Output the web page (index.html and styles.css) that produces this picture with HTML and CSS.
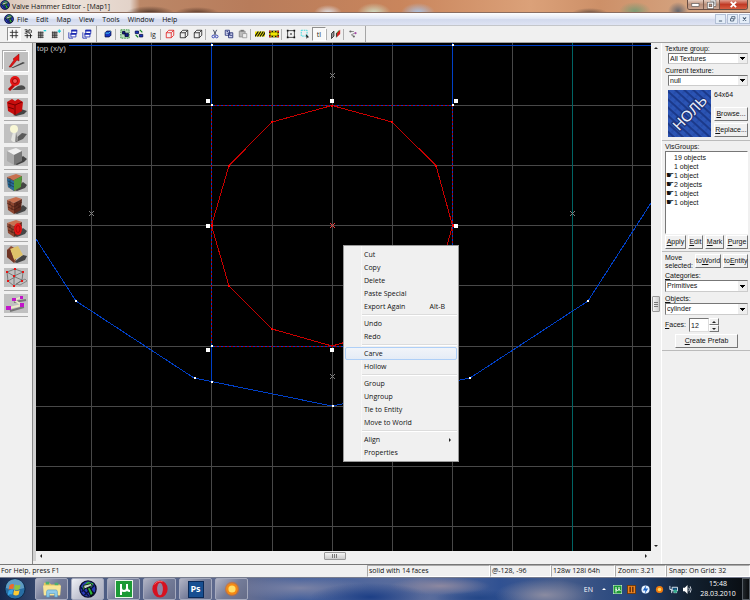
FILE: index.html
```html
<!DOCTYPE html>
<html lang="en">
<head>
    <meta charset="UTF-8">
    <meta name="viewport" content="width=device-width, initial-scale=1.0">
    <title>Valve Hammer Editor - [Map1]</title>
    <link rel="stylesheet" href="styles.css">
</head>
<body>

    <!-- shared icon shapes -->
    <svg class="defs" aria-hidden="true">
        <defs>
            <symbol id="hammer" viewBox="0 0 20 20">
                <circle cx="10" cy="10" r="9" fill="#2a3bb8" stroke="#080d2c" stroke-width="1.500"/>
                <path d="M3 13l10-10M6 17L17 6M2 8l9 10M13 12l5 3" stroke="#0a1040" stroke-width="1.500"/>
                <path d="M4 7l6-5 6 2-2 4-4 1-3-1-2 3z" fill="#2fb536"/>
                <path d="M9 9l3-1 4 7-3 3z" fill="#2fb536" stroke="#0a0f18" stroke-width="1.300"/>
                <path d="M5 6l8-2 2 2-9 4z" fill="#c9d9c9" stroke="#0a0f18"/>
            </symbol>
            <symbol id="cube" viewBox="0 0 12 12">
                <path d="M1.500 4.500h6v6h-6zM1.500 4.500l3-3h6l-3 3M10.500 1.500v6l-3 3" fill="none" stroke="currentColor"/>
            </symbol>
            <symbol id="windows" viewBox="0 0 12 12">
                <path d="M4.500 1.500h6v4h-6zM3.500 5.500h6v4h-6z" fill="#fff" stroke="#1929b0"/>
                <path d="M4 2h7M3 6h7" stroke="#1929b0" stroke-width="2"/>
                <path d="M1 4v7h5" fill="none" stroke="#1929b0"/>
            </symbol>
            <symbol id="brick" viewBox="0 0 24 19">
                <path d="M10 17l9-8 4 3-2 3-8 3z" fill="#454545"/>
                <path d="M3 4l9-3 6 2-8 4z" fill="#c7704f"/>
                <path d="M3 4l7 3v11l-6-4z" fill="#8c4630"/>
                <path d="M10 7l8-4-1 11-7 4z" fill="#5f2a1d"/>
                <path d="M3 7l7 4 8-5M4 11l6 3 7-4M6 5v4M8 10v4M13 6v3M15 9v3" fill="none" stroke="#3c1912" stroke-width="0.600"/>
            </symbol>
            <symbol id="torrent" viewBox="0 0 18 18">
                <rect width="18" height="18" fill="#e9f5e9"/>
                <rect x="1" y="1" width="16" height="16" fill="#1b9a35"/>
                <path d="M6 4v11M6 8q0 3 3 3t3-3V4M12 8q0 3 3 3" fill="none" stroke="#fff" stroke-width="2"/>
            </symbol>
        </defs>
    </svg>

    <div class="window">
        <header class="titlebar">
            <svg class="app-icon"><use href="#hammer"/></svg>
            <span class="title">Valve Hammer Editor - [Map1]</span>
            <div class="window-buttons">
                <button type="button" aria-label="Minimize"><svg viewBox="0 0 12 10"><rect x="2" y="4" width="8" height="3" fill="#fff" stroke="#555" stroke-width="0.700"/></svg></button>
                <button type="button" aria-label="Restore"><svg viewBox="0 0 12 10"><path d="M5 1h5v5h-1M2.500 3.500h5v5h-5z" fill="none" stroke="#555" stroke-width="2.600"/><path d="M5 1h5v5h-1M2.500 3.500h5v5h-5z" fill="none" stroke="#fff" stroke-width="1.300"/></svg></button>
                <button type="button" class="close" aria-label="Close"><svg viewBox="0 0 12 10"><path d="M3 2l6 6M9 2L3 8" stroke="#fff" stroke-width="2"/></svg></button>
            </div>
        </header>

        <nav class="menubar">
            <svg class="app-icon"><use href="#hammer"/></svg>
            <button type="button">File</button>
            <button type="button">Edit</button>
            <button type="button">Map</button>
            <button type="button">View</button>
            <button type="button">Tools</button>
            <button type="button">Window</button>
            <button type="button">Help</button>
            <div class="child-buttons">
                <button type="button" aria-label="Minimize map"><svg viewBox="0 0 10 10"><path d="M3 7.500h4" stroke="#40566f" stroke-width="1.200"/></svg></button>
                <button type="button" aria-label="Restore map"><svg viewBox="0 0 10 10"><path d="M4 4V2h4v3H7M2.500 4.500h4v3h-4z" fill="none" stroke="#40566f"/></svg></button>
                <button type="button" aria-label="Close map"><svg viewBox="0 0 10 10"><path d="M3 3l4 4M7 3L3 7" stroke="#40566f" stroke-width="1.300"/></svg></button>
            </div>
        </nav>

        <div class="toolbar">
            <div class="band band-grid">
                <button type="button" class="pressed" aria-label="Toggle grid"><svg viewBox="0 0 12 12"><path d="M4 1v10M8.500 1v10M1 4h10M1 8h10" stroke="#222"/></svg></button>
                <button type="button" aria-label="Toggle 3D grid"><svg viewBox="0 0 12 12"><path d="M2 1h3v4H2M3 3h2M7 1v4h2l1-1V2L9 1zM5 6v5M9 6v5M2 8h9" fill="none" stroke="#111"/></svg></button>
                <button type="button" aria-label="Smaller grid"><svg viewBox="0 0 12 12"><path d="M2 3v8M4 3v8M6 3v8M1 4h7M1 6h7M1 8h7M1 10h7" stroke="#333"/><path d="M8 2h3" stroke="#10cbd4" stroke-width="1.500"/></svg></button>
                <button type="button" aria-label="Bigger grid"><svg viewBox="0 0 12 12"><path d="M2 3v8M4 3v8M6 3v8M1 4h7M1 6h7M1 8h7M1 10h7" stroke="#333"/><path d="M8 2.500h4M10 .5v4" stroke="#10cbd4" stroke-width="1.500"/></svg></button>
                <span class="sep"></span>
                <button type="button" aria-label="Load window state"><svg><use href="#windows"/></svg></button>
                <button type="button" aria-label="Save window state"><svg><use href="#windows"/></svg></button>
            </div>
            <div class="band band-main">
                <button type="button" aria-label="Carve"><svg viewBox="0 0 12 12"><path d="M2.500 4.500l2-2h5v5l-2 2h-5z" fill="#1634c4" stroke="#061048"/><path d="M3 5h4l2-2" stroke="#45e0f0" fill="none"/></svg></button>
                <span class="sep"></span>
                <button type="button" aria-label="Group"><svg viewBox="0 0 12 12"><rect x="1" y="1" width="10" height="10" fill="#b9dfbd" stroke="#178523" stroke-dasharray="2 1"/><path d="M3 3h3v3H3zM6 5h4v4H6z" fill="#111d86" stroke="#071038"/></svg></button>
                <button type="button" aria-label="Ungroup"><svg viewBox="0 0 12 12"><path d="M1.500 2.500h4v3h-4zM6.500 6.500h4v3h-4z" fill="#1b36c0" stroke="#07104b"/><path d="M7 1l3 3M2 7l3 3" stroke="#178523" stroke-width="1.500"/></svg></button>
                <button type="button">ig</button>
                <span class="sep"></span>
                <button type="button" class="red" aria-label="Hide selected"><svg><use href="#cube"/></svg></button>
                <button type="button" aria-label="Hide unselected"><svg><use href="#cube"/></svg></button>
                <button type="button" aria-label="Show all"><svg><use href="#cube"/></svg></button>
                <span class="sep"></span>
                <button type="button" aria-label="Cut"><svg viewBox="0 0 12 12"><path d="M4 1l3 6M8 1L5 7" stroke="#26304d"/><circle cx="4" cy="9" r="1.600" fill="none" stroke="#1c2cae"/><circle cx="8" cy="9" r="1.600" fill="none" stroke="#1c2cae"/></svg></button>
                <button type="button" aria-label="Copy"><svg viewBox="0 0 12 12"><path d="M1.500 1.500h5v6h-5zM5.500 4.500h5v6h-5z" fill="#e8ebff" stroke="#1c2670"/><path d="M7 6h2M7 8h3M3 3h2M3 5h2" stroke="#1c2670"/></svg></button>
                <button type="button" aria-label="Paste"><svg viewBox="0 0 12 12"><path d="M1.500 2.500h7v7h-7z" fill="#bbb" stroke="#888"/><path d="M5.500 5.500h5v5h-5z" fill="#eee" stroke="#999"/><path d="M3 2h4" stroke="#777" stroke-width="2"/></svg></button>
                <span class="sep"></span>
                <button type="button" aria-label="Cordon"><svg viewBox="0 0 12 12"><rect y="3" width="12" height="6" fill="#f2e600"/><path d="M0 9l4-6M3 9l4-6M6 9l4-6M9 9l4-6" stroke="#111" stroke-width="1.500"/></svg></button>
                <button type="button" aria-label="Edit cordon"><svg viewBox="0 0 12 12"><rect x="1" y="3" width="10" height="6" fill="#f2e600" stroke="#111" stroke-width="2"/><rect x="1" y="3" width="10" height="6" fill="none" stroke="#f2e600" stroke-width="2" stroke-dasharray="2 2"/><path d="M0 2h2v2H0zM10 2h2v2h-2zM0 8h2v2H0zM10 8h2v2h-2z" fill="#d21818"/></svg></button>
                <span class="sep"></span>
                <button type="button" aria-label="Select by handles"><svg viewBox="0 0 12 12"><rect x="2" y="2" width="8" height="8" fill="none" stroke="#333"/><path d="M1 1h2v2H1zM9 1h2v2H9zM1 9h2v2H1zM9 9h2v2H9z" fill="#111"/><path d="M5 5l2 2M7 5L5 7" stroke="#555"/></svg></button>
                <button type="button" aria-label="Auto select"><svg viewBox="0 0 12 12"><rect x="1.500" y="1.500" width="7" height="7" fill="none" stroke="#23d6df" stroke-dasharray="2 1"/><path d="M7 6l4 4-2 .2L8 12z" fill="#222"/></svg></button>
                <button type="button" class="pressed">tl</button>
                <span class="sep"></span>
                <button type="button" aria-label="Texture alignment"><svg viewBox="0 0 12 12"><path d="M.5 5.500l3-3v6l-3 3z" fill="#999" stroke="#222"/><path d="M6 5l4-4v5l-4 3z" fill="#209b35"/><path d="M7 5l4-4v5l-4 4z" fill="#d32020"/><path d="M6.500 5v5" stroke="#333"/></svg></button>
                <span class="sep"></span>
                <button type="button" aria-label="Run map"><svg viewBox="0 0 12 12"><path d="M2 3h5M8 5L4 7l3 2" fill="none" stroke="#777"/><circle cx="3" cy="3" r="1.300" fill="#666"/><circle cx="9" cy="5" r="1.300" fill="#a44aa6"/><circle cx="7" cy="9" r="1.300" fill="#666"/></svg></button>
            </div>
        </div>

        <main class="workspace">
            <aside class="tools">
                <div class="tool-group">
                    <button type="button" class="active" aria-label="Selection tool"><svg viewBox="0 0 24 19"><path d="M7 16l12-6 2 1-12 5z" fill="#484848"/><path d="M5 15l5-7-1-1 6-5v7l-2-1-6 7z" fill="#e31414" stroke="#8a0505" stroke-width="0.500"/></svg></button>
                    <button type="button" aria-label="Magnify"><svg viewBox="0 0 24 19"><path d="M8 15l6-4q5-2 7 1t-5 3z" fill="#4a4a4a"/><path d="M5 15l5-5" stroke="#b90808" stroke-width="3"/><circle cx="11" cy="6" r="5" fill="#e51414"/><circle cx="11" cy="6" r="2.500" fill="#ee5050" stroke="#a00505"/></svg></button>
                    <button type="button" aria-label="Camera"><svg viewBox="0 0 24 19"><path d="M9 17l8-6 6 2-3 3-8 2z" fill="#444"/><path d="M3 4l5-3 3 2 3-2 5 3-1 9-7 4-7-4z" fill="#c70d0d"/><path d="M4 5l7 2 7-3M11 7v10M4 9l6 2" fill="none" stroke="#700" stroke-width="1"/></svg></button>
                </div>
                <div class="tool-group">
                    <button type="button" aria-label="Entity tool"><svg viewBox="0 0 24 19"><path d="M10 16l8-7 5 1-4 5-7 3z" fill="#5b5b5b"/><path d="M9 8h3l2 8-3 2H9l-2-2z" fill="#e4e4e0"/><path d="M12 8l2 8-3 2z" fill="#888"/><circle cx="10" cy="5" r="4" fill="#f8f7d5"/></svg></button>
                    <button type="button" aria-label="Block tool"><svg viewBox="0 0 24 19"><path d="M10 17l9-8 4 3-3 3-7 3z" fill="#444"/><path d="M3 4l9-3 6 3-8 4z" fill="#efefef"/><path d="M3 4l7 4v10l-7-4z" fill="#aaa"/><path d="M10 8l8-4v10l-8 4z" fill="#777"/></svg></button>
                </div>
                <div class="tool-group">
                    <button type="button" aria-label="Texture application"><svg viewBox="0 0 24 19"><use href="#brick"/><path d="M3 5l7 3v10l-6-4z" fill="#2a6c98"/><path d="M10 7l8-4-1 11-7 4z" fill="#4f9a3a"/><path d="M4 8l6 3M4 11l6 3M6 7v7" stroke="#19374a" stroke-width="0.700"/></svg></button>
                    <button type="button" aria-label="Apply texture"><svg><use href="#brick"/></svg></button>
                    <button type="button" aria-label="Apply decals"><svg viewBox="0 0 24 19"><use href="#brick"/><ellipse cx="14" cy="10" rx="4" ry="6" fill="#e21616"/><ellipse cx="14" cy="10" rx="2" ry="3.500" fill="none" stroke="#a50606" stroke-width="0.700"/></svg></button>
                </div>
                <div class="tool-group">
                    <button type="button" aria-label="Clipping tool"><svg viewBox="0 0 24 19"><path d="M10 17l9-7 4 1-2 4-8 3z" fill="#444"/><path d="M3 5l4-4 7 4-3 13-8-6z" fill="#8d4931"/><path d="M6 4l8-3 5 9-9 5z" fill="#dfc36a"/><path d="M3 5l3-1 4 11v3l-7-6z" fill="#6e3424"/></svg></button>
                    <button type="button" aria-label="Vertex tool"><svg viewBox="0 0 24 19"><path d="M12 16l9-5 2 2-7 4z" fill="none" stroke="#888"/><path d="M3 4l8-3 8 3-1 8-8 6-6-5zM3 4l7 4 9-4M10 8v10M11 1v8l7 3M4 13l7-4" fill="none" stroke="#666" stroke-width="0.800"/><path d="M2 3h2v2H2zM10 0h2v2h-2zM18 3h2v2h-2zM9 7h2v2H9zM3 12h2v2H3zM9 17h2v2H9zM17 12h2v2h-2z" fill="#e61515"/></svg></button>
                </div>
                <div class="tool-group">
                    <button type="button" aria-label="Path tool"><svg viewBox="0 0 24 19"><path d="M6 17l14-4M10 8l12-2" stroke="#777" stroke-width="2"/><path d="M5 14l13-3-8-5 8-3" fill="none" stroke="#eee8cb" stroke-width="1.800"/><path d="M2 12h5v4H2zM16 9h4v4h-4zM8 4h4v3H8zM16 2h3v3h-3z" fill="#c215ca"/></svg></button>
                </div>
            </aside>

            <section class="viewport">
                <div class="view">
                    <svg class="map" viewBox="36 43 615 508" preserveAspectRatio="xMinYMin slice">
                        <g class="grid">
                            <path d="M91.500 43V551M151.500 43V551M211.500 381V551M272.500 43V551M332.500 43V551M392.500 43V551M452.500 346V551M512.500 43V551M632.500 43V551"/>
                            <path d="M36 105.500H211M453 105.500H651M36 165.500H651M36 225.500H651M36 285.500H651M36 346.500H211M453 346.500H651M36 406.500H651M36 466.500H651M36 526.500H651"/>
                        </g>
                        <path class="axis" d="M572.500 43V551"/>
                        <g class="world">
                            <path d="M69 45.500H651M211.500 43V381M452.500 43V381M211 105.500H453M211 346.500H453"/>
                            <path d="M36 239L76 301L194 378L332 406L470 378L588 301L651 203"/>
                        </g>
                        <path class="bounds" d="M211 105.500H453M211 346.500H453M211.500 105V347M452.500 105V347"/>
                        <polygon class="cylinder" points="332,105.500 392,122 436,165.500 452.500,225.500 436,286 392,329 332,346 272,329 229,286 211.500,225.500 229,165.500 272,122"/>
                        <path class="cylinder-points" d="M331 105h2v2h-2zM391 121h2v2h-2zM435 165h2v2h-2zM228 165h2v2h-2zM271 121h2v2h-2zM228 285h2v2h-2zM271 328h2v2h-2zM211 224h2v3h-2zM452 224h2v3h-2z"/>
                        <path class="vertices" d="M75 300h2v2h-2zM194 377h2v2h-2zM211 381h2v2h-2zM332 405h2v2h-2zM469 377h2v2h-2zM587 300h2v2h-2zM211 44h2v2h-2zM452 44h2v2h-2zM211 104h2v2h-2zM452 104h2v2h-2zM211 345h2v2h-2z"/>
                        <path class="handles" d="M206 99h4v4h-4zM330 99h4v4h-4zM454 99h4v4h-4zM206 224h4v4h-4zM454 224h4v4h-4zM206 348h4v4h-4zM330 348h4v4h-4z"/>
                        <path class="centers" d="M330 73l5 5M335 73l-5 5M330 374l5 5M335 374l-5 5M89 211l5 5M94 211l-5 5M570 211l5 5M575 211l-5 5"/>
                        <path class="centers selected" d="M330 223l5 5M335 223l-5 5"/>
                    </svg>
                    <span class="view-label">top (x/y)</span>

                    <div class="context-menu">
                        <button type="button">Cut</button>
                        <button type="button">Copy</button>
                        <button type="button">Delete</button>
                        <button type="button">Paste Special</button>
                        <button type="button">Export Again <span>Alt-B</span></button>
                        <hr>
                        <button type="button">Undo</button>
                        <button type="button">Redo</button>
                        <hr>
                        <button type="button" class="hover">Carve</button>
                        <button type="button">Hollow</button>
                        <hr>
                        <button type="button">Group</button>
                        <button type="button">Ungroup</button>
                        <button type="button">Tie to Entity</button>
                        <button type="button">Move to World</button>
                        <hr>
                        <button type="button">Align <i class="arrow right"></i></button>
                        <button type="button">Properties</button>
                    </div>
                </div>
                <div class="scrollbar vertical">
                    <i class="arrow up"></i>
                    <div class="track before"></div>
                    <div class="thumb"></div>
                    <div class="track"></div>
                    <i class="arrow down"></i>
                </div>
                <div class="scrollbar horizontal">
                    <i class="arrow left"></i>
                    <div class="track"></div>
                    <div class="thumb"></div>
                    <div class="track before"></div>
                    <i class="arrow right"></i>
                </div>
            </section>

            <aside class="panel">
                <section class="texture">
                    <label for="textureGroup">Texture group:</label>
                    <select id="textureGroup"><option>All Textures</option></select>
                    <label for="currentTexture">Current texture:</label>
                    <select id="currentTexture"><option>null</option></select>
                    <div class="preview">
                        <svg class="swatch" viewBox="0 0 43 47">
                            <defs>
                                <pattern id="stripes" width="6" height="6" patternUnits="userSpaceOnUse" patternTransform="rotate(42)">
                                    <rect width="6" height="6" fill="#2b54b4"/>
                                    <path d="M0 1h6" stroke="#152f7c" stroke-width="1.500"/>
                                    <path d="M1 2v3" stroke="#2145a0"/>
                                </pattern>
                            </defs>
                            <rect width="43" height="47" fill="url(#stripes)"/>
                            <text x="22" y="28" transform="rotate(-46 22 23)" text-anchor="middle">НОЛЬ</text>
                        </svg>
                        <div class="preview-side">
                            <span>64x64</span>
                            <button type="button"><u>B</u>rowse...</button>
                            <button type="button"><u>R</u>eplace...</button>
                        </div>
                    </div>
                </section>

                <section class="visgroups">
                    <h2>VisGroups:</h2>
                    <ul>
                        <li>19 objects</li>
                        <li>1 object</li>
                        <li class="shown">1 object</li>
                        <li class="shown">2 objects</li>
                        <li class="shown">1 object</li>
                        <li class="shown">1 object</li>
                    </ul>
                    <div class="row">
                        <button type="button"><u>A</u>pply</button>
                        <button type="button"><u>E</u>dit</button>
                        <button type="button"><u>M</u>ark</button>
                        <button type="button"><u>P</u>urge</button>
                    </div>
                </section>

                <section class="objects">
                    <div class="row move">
                        <span>Move<br>selected:</span>
                        <button type="button">to<u>W</u>orld</button>
                        <button type="button">to<u>E</u>ntity</button>
                    </div>
                    <label for="categories"><u>C</u>ategories:</label>
                    <select id="categories"><option>Primitives</option></select>
                    <label for="objects"><u>O</u>bjects:</label>
                    <select id="objects"><option>cylinder</option></select>
                    <div class="faces">
                        <label for="faces"><u>F</u>aces:</label>
                        <input type="text" id="faces" value="12">
                        <div class="spinner">
                            <button type="button" aria-label="More faces"><i class="arrow up"></i></button>
                            <button type="button" aria-label="Fewer faces"><i class="arrow down"></i></button>
                        </div>
                    </div>
                    <button type="button" class="create"><u>C</u>reate Prefab</button>
                </section>
            </aside>
        </main>

        <footer class="statusbar">
            <span class="help">For Help, press F1</span>
            <span class="cell info">solid with 14 faces</span>
            <span class="cell position">@-128, -96</span>
            <span class="cell size">128w 128l 64h</span>
            <span class="cell zoom">Zoom: 3.21</span>
            <span class="cell snap">Snap: On Grid: 32</span>
        </footer>
    </div>

    <div class="taskbar">
        <button type="button" class="start" aria-label="Start">
            <svg viewBox="0 0 24 24">
                <circle cx="12" cy="12" r="11" fill="#286ea4" stroke="#0b2748"/>
                <path d="M2 11a10 10 0 0 1 20 0q-10 4-20 0z" fill="#7db4d3" opacity="0.650"/>
                <path d="M6 8q3-2 5-1l-1 5q-3-1-5 1z" fill="#f16a28"/>
                <path d="M12 7q3 2 6 0l-1 5q-3 2-6 0z" fill="#8bc63f"/>
                <path d="M5 14q3-2 5-1l-1 5q-2-1-5 1z" fill="#39a5e6"/>
                <path d="M11 13q3 2 6 0l-1 5q-3 2-6 0z" fill="#fecb32"/>
            </svg>
        </button>
        <button type="button" class="task" aria-label="Explorer">
            <svg viewBox="0 0 22 20"><path d="M2 3h6l2 2h10v12H2z" fill="#e8c85d"/><path d="M4 2h4v3H4zM14 3h4v3h-4z" fill="#4caf6e"/><path d="M1 6h20l-1 11H2z" fill="#f8e596"/><path d="M5 19v-6q0-2 2-2h8q2 0 2 2v6h-3v-4H8v4z" fill="#8fcae9" stroke="#4f9bc8" stroke-width="0.700"/></svg>
        </button>
        <button type="button" class="task active" aria-label="Hammer"><svg><use href="#hammer"/></svg></button>
        <button type="button" class="task" aria-label="Torrents"><svg><use href="#torrent"/></svg></button>
        <button type="button" class="task" aria-label="Opera">
            <svg viewBox="0 0 20 20"><ellipse cx="10" cy="10" rx="8.500" ry="9.500" fill="#d61220"/><ellipse cx="10" cy="10" rx="3.200" ry="7" fill="#8f86a2"/><path d="M4 5q3-5 9-3" stroke="#f66" fill="none"/></svg>
        </button>
        <button type="button" class="task" aria-label="Photoshop"><span class="ps">Ps</span></button>
        <button type="button" class="task" aria-label="Messenger">
            <svg viewBox="0 0 20 20"><circle cx="10" cy="10" r="8" fill="#e66b10" opacity="0.550"/><circle cx="10" cy="10" r="6.500" fill="#f58a13"/><circle cx="10" cy="10" r="4" fill="#ffdf68"/></svg>
        </button>

        <div class="tray">
            <span class="lang">EN</span>
            <i class="arrow up"></i>
            <svg><use href="#torrent"/></svg>
            <svg viewBox="0 0 10 10"><rect x="0.500" y="0.500" width="9" height="9" fill="#ee8420" stroke="#6c3a0a"/><path d="M3.500 2v6M6.500 2v6" stroke="#53250a" stroke-width="1.500"/></svg>
            <svg viewBox="0 0 10 10"><circle cx="5" cy="5" r="4.500" fill="#e8f3ff"/><path d="M6 0L2 6h3L4 10l4-6H5z" fill="#1761c7"/></svg>
            <svg viewBox="0 0 10 10"><circle cx="5" cy="5" r="4" fill="#f17a0d"/><circle cx="5" cy="5" r="2" fill="#ffd45c"/></svg>
            <svg viewBox="0 0 10 10"><path d="M3.500 2.500h6v4h-6zM5 8.500h4M1 1v4h2v4" fill="#124f7d" stroke="#e5edf5"/><circle cx="7" cy="7" r="2" fill="#35ad8e"/></svg>
            <svg viewBox="0 0 10 10"><path d="M0 3h2l3-3v10L2 7H0z" fill="#fff"/><path d="M6.500 3q1 2 0 4M8 1.500q2 3.500 0 7" fill="none" stroke="#dfe7ef"/></svg>
            <div class="clock">15:48<br>28.03.2010</div>
        </div>
        <button type="button" class="show-desktop" aria-label="Show desktop"></button>
    </div>

</body>
</html>
```

FILE: styles.css
```css
* {
    box-sizing: border-box;
}
body {
    display: flex;
    flex-direction: column;
    min-height: 100vh;
    margin: 0;
    font-family: "Open Sans", "Noto Sans", sans-serif;
    font-size: 7px;
    line-height: 9px;
    color: #111;
    background-color: #f0f0f0;
}
button, select, input {
    margin: 0;
    padding: 0;
    border: none;
    border-radius: 0;
    background: none;
    font: inherit;
    color: inherit;
}
svg {
    display: block;
}
.defs {
    position: absolute;
    width: 0;
    height: 0;
}
.window {
    display: flex;
    flex: 1;
    flex-direction: column;
}
.app-icon {
    width: 10px;
    height: 10px;
}

/* arrows */
.arrow {
    display: block;
    width: 0;
    height: 0;
    border: 2px solid transparent;
}
.arrow.up {
    border-top: none;
    border-bottom-color: #222;
}
.arrow.down {
    border-bottom: none;
    border-top-color: #222;
}
.arrow.left {
    border-left: none;
    border-right-color: #222;
}
.arrow.right {
    border-right: none;
    border-left-color: #222;
}

/* title bar and menu */
.titlebar {
    display: flex;
    gap: 2px;
    height: 13px;
    border-bottom: 1px solid #8b6d60;
    background: radial-gradient(ellipse 24px 7px at 150px 13px, #4d3428, transparent),
        radial-gradient(ellipse 22px 6px at 197px 13px, #5b3b2c, transparent),
        radial-gradient(ellipse 14px 8px at 328px 13px, #dfe4ec, transparent),
        radial-gradient(ellipse 17px 10px at 374px 13px, #cfe0c8, transparent),
        radial-gradient(ellipse 17px 10px at 418px 13px, #a9c5ea, transparent),
        radial-gradient(ellipse 18px 5px at 590px 13px, #6c5344, transparent),
        radial-gradient(ellipse 16px 9px at 635px 11px, #7d9b74, transparent),
        radial-gradient(ellipse 10px 9px at 678px 11px, #65666d, transparent),
        linear-gradient(90deg, #d9c4b6, #eee4dc 60px, #e3d3c9 130px, #bb8767 140px, #b87c5b 250px, #c9855c 400px, #dba179 530px, #cd9068 600px, #d9b090);
}
.title {
    flex: 1;
    line-height: 13px;
}
.window-buttons {
    display: flex;
    height: 10px;
    margin-right: 2px;
    border: 1px solid #684d43;
    border-top: none;
    border-radius: 0 0 3px 3px;
    overflow: hidden;
}
.window-buttons button {
    width: 16px;
    border-right: 1px solid #76594d;
    background: linear-gradient(#e6cfc2, #b98f7a 50%, #c8a38f);
}
.window-buttons .close {
    width: 27px;
    border: none;
    background: linear-gradient(#e0a090, #c13a25 50%, #d75c40);
}
.window-buttons svg {
    height: 9px;
    margin: 0 auto;
}
.menubar {
    display: flex;
    align-items: center;
    gap: 8px;
    height: 12px;
    padding-left: 4px;
    background: linear-gradient(#fdfeff, #e3e8f5 45%, #d3daed 55%, #dfe4f4);
}
.menubar .app-icon {
    margin-right: -5px;
}
.child-buttons {
    display: flex;
    gap: 1px;
    margin-left: auto;
}
.child-buttons button {
    width: 11px;
    height: 10px;
    border: 1px solid #b3c0d6;
    background-color: #e4edf8;
}
.child-buttons svg {
    width: 9px;
    height: 8px;
}

/* toolbar */
.toolbar {
    display: flex;
    height: 18px;
    border-top: 1px solid #c4c6ca;
    border-bottom: 1px solid #a0a0a0;
}
.band {
    display: flex;
    align-items: center;
    border-right: 1px solid #a5a5a5;
}
.band-grid {
    padding: 0 2px 0 7px;
}
.band-main {
    padding: 0 5px 0 4px;
}
.toolbar button {
    display: flex;
    justify-content: center;
    align-items: center;
    width: 14px;
    height: 14px;
    color: #222;
}
.toolbar button.red {
    color: #e32222;
}
.toolbar button.pressed {
    border: 1px solid #a0a0a0;
    border-color: #909090 #fff #fff #909090;
    background-color: #f9f9f9;
}
.toolbar svg {
    flex: none;
    width: 10px;
    height: 10px;
}
.sep {
    width: 3px;
    height: 11px;
    border-left: 1px solid #b0b0b0;
}

/* workspace */
.workspace {
    display: flex;
    flex: 1;
}
.tools {
    width: 33px;
    padding: 9px 4px 0;
    border-right: 1px solid #888;
}
.tool-group {
    display: flex;
    flex-direction: column;
    gap: 4px;
    margin-bottom: 3px;
    padding-bottom: 3px;
    border-bottom: 1px solid #aaa;
}
.tool-group button {
    width: 24px;
    height: 19px;
    background-color: #c0c0c0;
}
.tool-group button.active {
    outline: 1px solid #fff;
    box-shadow: -2px -2px #aaa;
}
.tool-group svg {
    width: 24px;
    height: 19px;
}
.viewport {
    display: grid;
    flex: 1;
    grid-template-columns: 1fr 10px;
    grid-template-rows: 1fr 10px;
    margin-bottom: 3px;
    border-left: 3px solid #d0d0d0;
}
.view {
    position: relative;
    overflow: hidden;
    background-color: #000;
}
.map {
    position: absolute;
    width: 100%;
    height: 100%;
    shape-rendering: crispEdges;
}
.view-label {
    position: absolute;
    top: 1px;
    left: 1px;
    font-family: "Liberation Sans", Arial, sans-serif;
    font-size: 8px;
    color: #c0c0c0;
}
.grid {
    stroke: #484848;
}
.axis {
    stroke: #006464;
}
.world {
    fill: none;
    stroke: #0040c8;
}
.bounds {
    fill: none;
    stroke: #b00000;
    stroke-dasharray: 2 2;
}
.cylinder {
    fill: none;
    stroke: #c80000;
}
.cylinder-points {
    fill: #f00;
}
.vertices, .handles {
    fill: #fff;
}
.centers {
    stroke: #808080;
}
.centers.selected {
    stroke: #f04040;
}

/* context menu */
.context-menu {
    position: absolute;
    top: 202px;
    left: 307px;
    width: 116px;
    padding: 2px 1px;
    border: 1px solid #999;
    background: linear-gradient(90deg, #f0f0f0 16px, #dfdfdf 16px, #fff 17px, #f0f0f0 18px);
}
.context-menu button {
    display: flex;
    justify-content: space-between;
    align-items: center;
    width: 100%;
    height: 13px;
    padding: 0 11px 0 18px;
    border: 1px solid transparent;
    border-radius: 2px;
}
.context-menu .hover {
    border-color: #aecff7;
    background: linear-gradient(#f1f4f9, #e5ecf6);
}
.context-menu .arrow {
    margin-right: -6px;
}
.context-menu hr {
    height: 2px;
    margin: 1px 0 1px 17px;
    border: none;
    border-top: 1px solid #dcdcdc;
    background-color: #fff;
}

/* scroll bars */
.scrollbar {
    display: flex;
    align-items: center;
    background-color: #f0f0f0;
}
.scrollbar.vertical {
    flex-direction: column;
    padding: 4px 0;
}
.scrollbar.horizontal {
    padding: 0 4px;
}
.track {
    flex: 48;
}
.track.before {
    flex: 51;
}
.thumb {
    border: 1px solid #999;
    border-radius: 1px;
}
.vertical .thumb {
    width: 8px;
    height: 16px;
    background: repeating-linear-gradient(#777 0 1px, transparent 1px 2px) center / 4px 5px no-repeat, linear-gradient(90deg, #f4f4f4, #ccc);
}
.horizontal .thumb {
    width: 22px;
    height: 8px;
    background: repeating-linear-gradient(90deg, #777 0 1px, transparent 1px 2px) center / 5px 4px no-repeat, linear-gradient(#f4f4f4, #ccc);
}

/* right panel */
.panel {
    width: 89px;
    border-left: 1px solid #fff;
    font-family: "Liberation Sans", Arial, sans-serif;
    font-size: 7px;
    line-height: 8px;
}
.panel section {
    display: flex;
    flex-direction: column;
    padding: 2px 2px 2px 3px;
    border-bottom: 1px solid #bbb;
}
.panel h2 {
    margin: 0;
    font-size: 7px;
    font-weight: normal;
}
.panel select {
    appearance: none;
    height: 12px;
    margin-bottom: 3px;
    padding: 0 10px 0 1px;
    border: 1px solid #777;
    border-right-color: #ccc;
    border-bottom-color: #ccc;
    background: conic-gradient(from -45deg at 50% 100%, #000 0 90deg, transparent 0) right 2px center / 5px 3px no-repeat, linear-gradient(#eee, #eee) right / 9px no-repeat, #fff;
}
.panel button {
    border: 1px solid #fff;
    border-right-color: #777;
    border-bottom-color: #777;
    white-space: nowrap;
}
.panel .texture select {
    height: 11px;
    margin-left: 3px;
}
.preview {
    display: flex;
    gap: 3px;
    padding: 1px 0 1px 3px;
}
.swatch {
    flex: none;
    width: 43px;
    height: 47px;
}
.swatch text {
    font-family: "Liberation Sans", Arial, sans-serif;
    font-size: 15px;
    fill: #e8edfa;
    stroke: #1a2f72;
    stroke-width: 2px;
    paint-order: stroke;
}
.preview-side {
    display: flex;
    flex: 1;
    flex-direction: column;
    justify-content: space-between;
}
.preview-side span {
    padding: 1px 0 5px;
}
.preview-side button {
    height: 14px;
}
.visgroups ul {
    height: 83px;
    margin: 0 0 1px;
    padding: 1px 0;
    border: 1px solid #777;
    border-right-color: #fff;
    border-bottom-color: #fff;
    background-color: #fff;
    line-height: 9px;
    list-style: none;
}
.visgroups li {
    padding-left: 8px;
}
.visgroups li.shown::before {
    content: "☛";
    float: left;
    width: 8px;
    margin-left: -8px;
    font-family: "DejaVu Sans", sans-serif;
    font-size: 9px;
}
.row {
    display: flex;
    gap: 2px;
}
.row button {
    flex: 1 1 auto;
    height: 14px;
}
.move {
    margin-bottom: 2px;
}
.faces {
    display: flex;
    align-items: center;
    margin-bottom: 2px;
}
.faces input {
    width: 20px;
    height: 14px;
    margin-left: 3px;
    padding: 0 1px;
    border: 1px solid #777;
    border-right-color: #ddd;
    border-bottom-color: #ddd;
    background-color: #fff;
}
.spinner button {
    display: flex;
    justify-content: center;
    align-items: center;
    width: 10px;
    height: 7px;
}
.panel .create {
    width: 63px;
    height: 14px;
    margin-left: 10px;
}

/* status bar */
.statusbar {
    display: flex;
    height: 13px;
    border-top: 1px solid #777;
    line-height: 12px;
    white-space: nowrap;
}
.help {
    flex: 1;
    padding-left: 1px;
}
.cell {
    padding-left: 1px;
    border: 1px solid #fff;
    border-top-color: #aaa;
    border-left-color: #aaa;
    line-height: 10px;
}
.info {
    width: 123px;
}
.position {
    width: 61px;
}
.size {
    width: 64px;
}
.zoom {
    width: 51px;
    padding-left: 2px;
}
.snap {
    width: 84px;
    padding-left: 2px;
}

/* taskbar */
.taskbar {
    display: flex;
    gap: 3px;
    height: 23px;
    border-top: 1px solid #777c8d;
    background: radial-gradient(ellipse 60px 14px at 370px 19px, #1d3f86, transparent),
        radial-gradient(ellipse 50px 9px at 440px 8px, #8d88a0, transparent),
        radial-gradient(ellipse 70px 12px at 300px 10px, #7c83a5, transparent),
        radial-gradient(ellipse 50px 16px at 545px 17px, #8a8ba1, transparent),
        radial-gradient(ellipse 45px 8px at 480px 20px, #234687, transparent),
        linear-gradient(90deg, #16284d, #46587f 60px, #636d91 250px, #415e9b 300px, #60709d 420px, #305192 500px, #465c8b 560px, #26467c 630px, #12202f 690px, #080c10);
    color: #fff;
}
.start {
    width: 32px;
    padding-left: 4px;
}
.start svg {
    width: 22px;
    height: 22px;
}
.task {
    display: flex;
    justify-content: center;
    align-items: center;
    width: 33px;
    border: 1px solid #a5aabe;
    border-radius: 2px;
    background: linear-gradient(135deg, #b2b4c4, #747c99 50%, #656c88);
}
.task.active {
    background: linear-gradient(135deg, #eef0f5, #bfc2d0 50%, #aaaebf);
}
.task svg {
    width: 20px;
    height: 18px;
}
.ps {
    width: 16px;
    height: 17px;
    border: 1px solid #0b2a58;
    background-color: #174f91;
    font-size: 9px;
    font-weight: bold;
    line-height: 14px;
}
.tray {
    display: flex;
    align-items: center;
    gap: 5px;
    margin-left: auto;
}
.tray svg {
    width: 9px;
    height: 9px;
}
.tray .arrow.up {
    margin: 0 2px 0 4px;
    border-bottom-color: #fff;
}
.clock {
    width: 42px;
    line-height: 10px;
    text-align: center;
}
.show-desktop {
    width: 8px;
    border: 1px solid #555c63;
    background: linear-gradient(90deg, #20262b, #0a0c0e);
}
```
